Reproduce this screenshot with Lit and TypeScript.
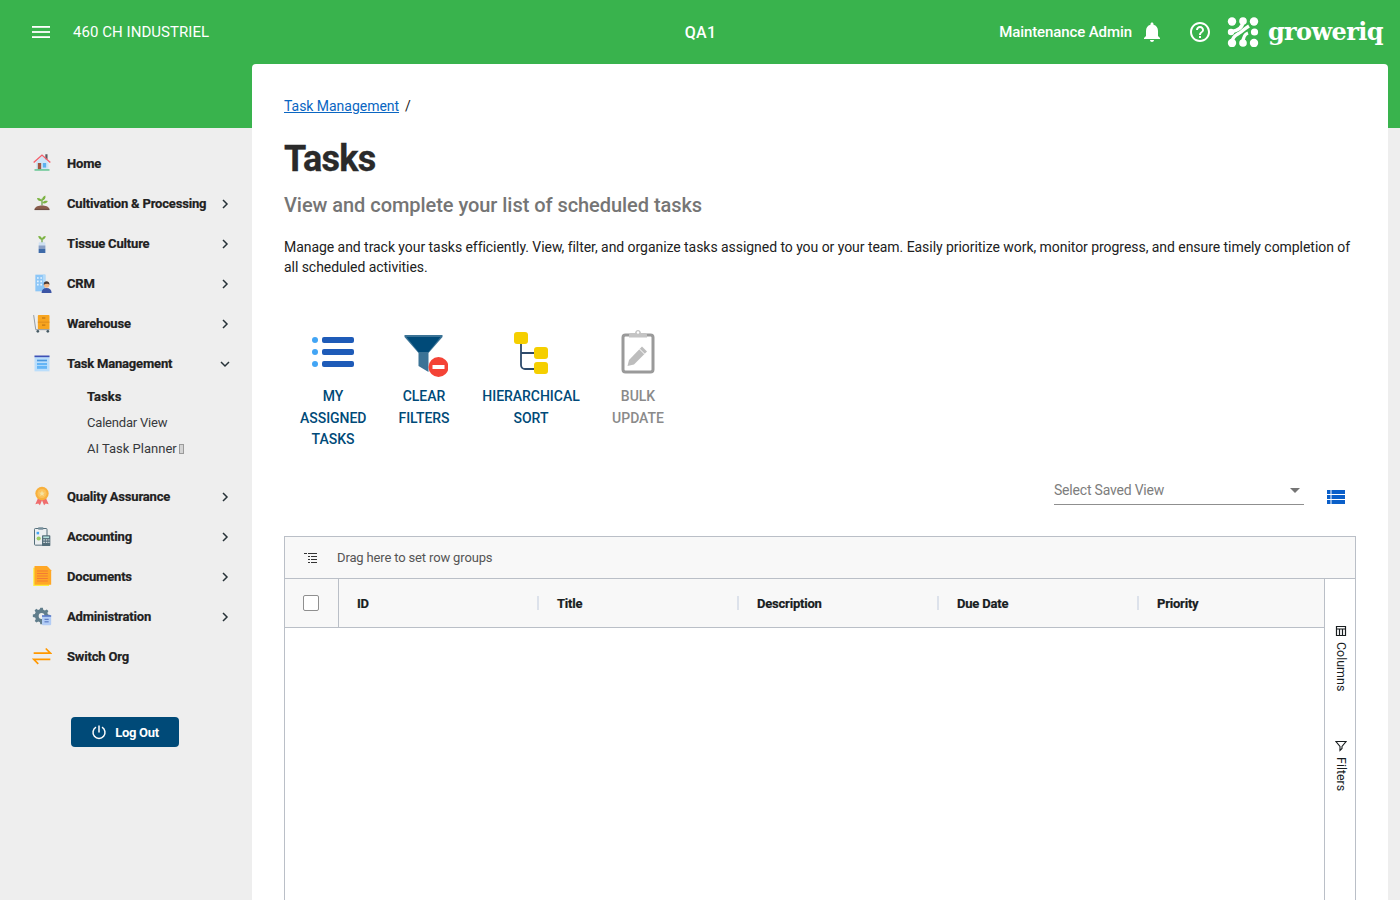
import { LitElement, css, html, svg } from "lit";
import { customElement } from "lit/decorators.js";

const menuIcons: Record<string, unknown> = {
  home: svg`<path d="M5 10.500 12 4l4 3.600V3h2.400v6.800L19.800 11v9H5z" fill="#cfe6f7"/><rect x="16" y="1.500" width="2.600" height="6" fill="#5d5a5f"/><path d="M2 11.500 12 2.500l10 9" fill="none" stroke="#f4606c" stroke-width="1.700"/><rect x="7" y="12" width="4" height="7.500" fill="#a1563f"/><rect x="13" y="12" width="4" height="5.500" fill="#5cb1ee"/><rect x="3" y="19.500" width="18" height="1.700" fill="#59c28a"/>`,
  plant: svg`<path d="M12 15V7" stroke="#5f9e3a" stroke-width="1.400"/><path d="M12 10C8 10 6.500 8.500 6 6c3-.5 5.500 1 6 4ZM12 9c0-3 1.500-5 4-6 .8 3-.5 5.500-4 6ZM12 12c2-2.500 4-3 7-2.400-1 2.600-3.500 3.600-7 2.400Z" fill="#7cb342"/><path d="M3 19.500c1-3.500 5-4.500 9-4.500s8 1 9 4.500Z" fill="#8a5d4c"/><rect x="3" y="19" width="18" height="1.500" fill="#6d4c41"/>`,
  tissue: svg`<path d="M12 12V6" stroke="#5f9e3a" stroke-width="1.400"/><path d="M12 8C9.500 8 8 6.500 7.500 3.500c3-.2 4.500 1.500 4.500 4.500ZM12 8c0-3 1.500-4.500 4.500-4.500C16 6.500 14.500 8 12 8Z" fill="#7cb342"/><rect x="8" y="11" width="8" height="13" rx="1" fill="#cfe0f2"/><rect x="8" y="15" width="8" height="4" fill="#8a9fc4"/><rect x="8" y="19" width="8" height="5" fill="#3e6aa8"/>`,
  crm: svg`<rect x="4" y="2" width="12" height="20" fill="#8cc6f7"/><path d="M6 5h2v2H6zm4 0h2v2h-2zM6 9h2v2H6zm4 0h2v2h-2zm-4 4h2v2H6zm4 0h2v2h-2z" fill="#e5f3fe"/><rect x="13" y="2" width="3" height="9" fill="#b2daf9"/><path d="M11.500 24c0-4 2.500-6 6-6s6 2 6 6Z" fill="#3c55a5"/><circle cx="17.500" cy="14.500" r="3.300" fill="#f3b98a"/><path d="M14 14c0-3 1.800-4 3.500-4s3.500 1 3.500 4c-1.500-1.500-4-1.500-7 0Z" fill="#4a3a35"/>`,
  warehouse: svg`<rect x="7" y="2.500" width="14" height="17" rx="1" fill="#f8a51f"/><path d="M7 11h14" stroke="#d9861a" stroke-width="1"/><path d="M12 6h4M12 14.500h4" stroke="#b46c12" stroke-width="1.200"/><path d="M2 2.500 4.500 20H21" fill="none" stroke="#8b949b" stroke-width="1.100"/><circle cx="7" cy="22" r="1.600" fill="#455a64"/><circle cx="19" cy="22" r="1.600" fill="#455a64"/>`,
  task: svg`<rect x="3" y="4" width="18" height="18" fill="#bbdefb"/><rect x="3" y="3" width="18" height="2" fill="#3f51b5"/><rect x="6" y="8" width="12" height="2" fill="#4a98e0"/><rect x="6" y="12" width="12" height="7" fill="#64b5f6"/><path d="M6 15h12" stroke="#bbdefb"/>`,
  quality: svg`<path d="m8 13-4 9 3.500-1 2 2L13 15Zm8 0 4 9-3.500-1-2 2L11 15Z" fill="#ef6d6d"/><circle cx="12" cy="9" r="8" fill="#f8b03c"/><circle cx="12" cy="9" r="5.500" fill="#fbc35c"/><path d="m12 5.500 1 2.300 2.500.2-1.900 1.600.6 2.400-2.200-1.300-2.200 1.300.6-2.400L8.500 8l2.500-.2Z" fill="#f5e3a2"/>`,
  accounting: svg`<rect x="3" y="3" width="15" height="20" rx="1" fill="#eceff1" stroke="#546e7a" stroke-width="1.200"/><rect x="7.500" y="1.500" width="6" height="3" fill="#78909c"/><rect x="5.500" y="7" width="3" height="3" fill="#42a5f5"/><circle cx="8" cy="15" r="2.500" fill="#9ccc65"/><rect x="12" y="11" width="10" height="13" rx="1" fill="#546e7a"/><path d="M13.500 16h2v1.500h-2zm3 0h2v1.500h-2zm-3 3h2v1.500h-2zm3 0h2v1.500h-2zm3-3h1.500v1.500H19.500zm0 3h1.500v1.500H19.500z" fill="#cfd8dc"/><rect x="13.500" y="12.500" width="7" height="2" fill="#b2dfdb"/>`,
  documents: svg`<rect x="1.500" y="2" width="19" height="22" fill="#ffeb3b"/><path d="M3 0h15l5 5v17.500H3Z" fill="#ffa726"/><path d="M6 6h13M6 9h13M6 12h13M6 15h13M6 18h13" stroke="#ef6c3a" stroke-width=".9"/>`,
  admin: svg`<path d="M10 2h3l.5 2.500 2 .9 2.200-1.300 2 2-1.300 2.200.8 2 2.500.6v3l-2.500.5-.8 2 1.300 2.200-2 2-2.200-1.300-2 .9L13 22h-3l-.5-2.500-2-.9-2.200 1.300-2-2 1.300-2.200-.9-2L1 13.200v-3l2.500-.6.900-2L3.100 5.400l2-2 2.200 1.300 2-.9Z" fill="#607d8b"/><circle cx="11.500" cy="12" r="3.500" fill="#eeeeee"/><rect x="12" y="12" width="11" height="11" rx="1" fill="#b3cdf5"/><rect x="12" y="11" width="11" height="2" fill="#5c7cc9"/><path d="M15 16h5M15 19h5" stroke="#4466b8" stroke-width="1.100"/>`,
  swap: svg`<path d="M2 8.500h20l-5.500-5.500M22 16H2l5.500 5.500" fill="none" stroke="#ff9800" stroke-width="2"/>`,
};

type MenuItem = { icon: string; label: string; chevron?: string };

const topMenu: MenuItem[] = [
  { icon: "home", label: "Home" },
  { icon: "plant", label: "Cultivation & Processing", chevron: "right" },
  { icon: "tissue", label: "Tissue Culture", chevron: "right" },
  { icon: "crm", label: "CRM", chevron: "right" },
  { icon: "warehouse", label: "Warehouse", chevron: "right" },
  { icon: "task", label: "Task Management", chevron: "down" },
];

const bottomMenu: MenuItem[] = [
  { icon: "quality", label: "Quality Assurance", chevron: "right" },
  { icon: "accounting", label: "Accounting", chevron: "right" },
  { icon: "documents", label: "Documents", chevron: "right" },
  { icon: "admin", label: "Administration", chevron: "right" },
  { icon: "swap", label: "Switch Org" },
];

const columns = ["ID", "Title", "Description", "Due Date", "Priority"];

@customElement("app-root")
export class AppRoot extends LitElement {
  static styles = css`
    :host {
      display: block;
      height: 900px;
      overflow: hidden;
      background: #eeeeee;
      font-family: Roboto, "Liberation Sans", sans-serif;
      color: #212121;
    }

    .band {
      height: 128px;
      background: #39b34d;
      color: #fff;
    }

    .toolbar {
      height: 64px;
      display: grid;
      grid-template-columns: 1fr auto 1fr;
      align-items: center;
      padding: 0 17px 0 16px;
      font-size: 15px;
    }

    .toolbar-left,
    .toolbar-right {
      display: flex;
      align-items: center;
    }

    .toolbar-left {
      margin-left: 16px;
    }

    .toolbar-right {
      justify-content: flex-end;
    }

    .org {
      margin-left: 23px;
      letter-spacing: 0.05px;
    }

    .env {
      font-size: 16px;
      font-weight: 500;
      letter-spacing: 0.3px;
      margin-left: 2px;
    }

    .user {
      font-weight: 500;
      letter-spacing: -0.1px;
      margin-right: 8px;
    }

    .help {
      margin-left: 24px;
      margin-right: 15px;
    }

    .logo-text {
      margin-left: 9px;
      font-family: "DejaVu Serif", serif;
      font-weight: 700;
      font-size: 24px;
      letter-spacing: -0.6px;
      line-height: 30px;
    }

    .body {
      display: flex;
      margin-top: -64px;
    }

    .side {
      width: 252px;
      flex: none;
      padding-top: 79px;
    }

    .item {
      height: 40px;
      display: flex;
      align-items: center;
      padding-left: 32px;
      font-size: 13px;
      font-weight: 700;
      letter-spacing: -0.18px;
      -webkit-text-stroke: 0.2px #212121;
      color: #212121;
    }

    .item svg.icon {
      width: 20px;
      height: 20px;
      flex: none;
    }

    .item .label {
      margin-left: 15px;
      flex: 1;
    }

    .item .chev {
      margin: 2px 22px 0 0;
    }

    .sub {
      padding: 0 0 14px 87px;
      font-size: 13px;
      color: #37393c;
      margin-top: 1px;
    }

    .sub div {
      height: 26px;
      line-height: 26px;
    }

    .sub .active {
      font-weight: 700;
      -webkit-text-stroke: 0.2px #212121;
      color: #212121;
    }

    .sub .cal {
      letter-spacing: -0.2px;
    }

    .tofu {
      display: inline-block;
      width: 5px;
      height: 10px;
      margin-left: 2px;
      vertical-align: -1px;
      background: #d4d4d4;
      border: 1px solid #9a9a9a;
      box-sizing: border-box;
    }

    .logout {
      width: 108px;
      height: 30px;
      margin: 41px 0 0 71px;
      display: flex;
      align-items: center;
      justify-content: center;
      gap: 8px;
      border: none;
      border-radius: 4px;
      background: #004a78;
      color: #fff;
      font-family: inherit;
      font-size: 13px;
      font-weight: 700;
      letter-spacing: -0.3px;
    }

    .main {
      flex: none;
      width: 1136px;
      box-sizing: border-box;
      height: 900px;
      background: #fff;
      border-radius: 4px 4px 0 0;
      padding: 32px;
      letter-spacing: -0.03px;
    }

    .crumbs {
      font-size: 14px;
      line-height: 20px;
      color: #212121;
    }

    .crumbs a {
      color: #0a66c2;
      text-decoration: underline;
    }

    .crumbs span {
      margin-left: 6px;
    }

    h1 {
      margin: 21px 0 0;
      font-size: 36px;
      font-weight: 700;
      line-height: 44px;
      letter-spacing: -0.7px;
      -webkit-text-stroke: 0.3px #2a2a2a;
      color: #2a2a2a;
    }

    h2 {
      margin: 10px 0 0;
      font-size: 20px;
      font-weight: 500;
      line-height: 28px;
      letter-spacing: -0.05px;
      color: #757575;
    }

    .desc {
      margin: 18px 0 0;
      font-size: 14px;
      line-height: 20px;
      letter-spacing: -0.05px;
      color: #212121;
    }

    .actions {
      display: flex;
      margin-top: 44px;
      height: 131px;
    }

    .action {
      padding: 8px 16px 0;
      text-align: center;
      font-size: 14px;
      font-weight: 500;
      line-height: 21.500px;
      color: #004a78;
      box-sizing: content-box;
    }

    .action.off {
      color: #8a8a8a;
    }

    .action svg {
      display: block;
      margin: 0 auto 9px;
      width: 48px;
      height: 48px;
    }

    .views {
      display: flex;
      justify-content: flex-end;
      align-items: center;
      height: 38px;
      padding-right: 11px;
      gap: 23px;
      margin-top: 18px;
    }

    .select {
      width: 250px;
      height: 32px;
      box-sizing: border-box;
      display: flex;
      align-items: center;
      justify-content: space-between;
      border-bottom: 1px solid #8f8f8f;
      color: #7d7d7d;
      font-size: 14px;
      letter-spacing: -0.2px;
      padding-top: 3px;
    }

    .select i {
      width: 0;
      height: 0;
      margin-right: 4px;
      border-left: 5px solid transparent;
      border-right: 5px solid transparent;
      border-top: 5px solid #757575;
    }

    .view-icon {
      margin-top: 16px;
    }

    .grid {
      margin-top: 29px;
      height: 500px;
      border: 1px solid #babfc7;
      display: flex;
      flex-direction: column;
    }

    .groups {
      height: 41px;
      flex: none;
      display: flex;
      align-items: center;
      background: #f8f8f8;
      border-bottom: 1px solid #babfc7;
      padding-left: 18px;
      gap: 18px;
      font-size: 13px;
      letter-spacing: -0.15px;
      color: #555;
    }

    .grid-body {
      flex: 1;
      display: flex;
    }

    .table {
      flex: 1;
      min-width: 0;
      overflow: hidden;
    }

    .head {
      height: 48px;
      display: flex;
      background: #f8f8f8;
      border-bottom: 1px solid #babfc7;
    }

    .check-col {
      width: 54px;
      flex: none;
      box-sizing: border-box;
      display: flex;
      align-items: center;
      padding-left: 18px;
      border-right: 1px solid #babfc7;
    }

    .check {
      width: 16px;
      height: 16px;
      background: #fff;
      border: 1.500px solid #8f8f8f;
      border-radius: 2px;
      box-sizing: border-box;
    }

    .col {
      width: 200px;
      flex: none;
      box-sizing: border-box;
      display: flex;
      align-items: center;
      justify-content: space-between;
      padding-left: 18px;
      font-size: 13px;
      font-weight: 700;
      letter-spacing: -0.2px;
      -webkit-text-stroke: 0.2px #181d1f;
      color: #181d1f;
    }

    .col i {
      width: 2px;
      height: 14px;
      background: #dde2eb;
    }

    .tools {
      width: 31px;
      flex: none;
      border-left: 1px solid #babfc7;
      box-sizing: border-box;
      display: flex;
      flex-direction: column;
      align-items: center;
      padding: 46px 0 0 2px;
      gap: 49px;
    }

    .tool {
      writing-mode: vertical-lr;
      display: flex;
      align-items: center;
      gap: 5px;
      font-size: 12.500px;
      color: #181d1f;
    }

    .tool svg {
      width: 12px;
      height: 12px;
    }
  `;

  chevron(dir?: string) {
    if (!dir) return null;
    return html`<svg class="chev" width="10" height="10" viewBox="0 0 10 10" fill="none" stroke="#263238" stroke-width="1.500">
      <path d=${dir === "down" ? "M1 3l4 4 4-4" : "M3 1l4 4-4 4"} />
    </svg>`;
  }

  menuItem(m: MenuItem) {
    return html`<div class="item">
      <svg class="icon" viewBox="0 0 24 24">${menuIcons[m.icon]}</svg>
      <span class="label">${m.label}</span>
      ${this.chevron(m.chevron)}
    </div>`;
  }

  logo() {
    return html`<svg width="32" height="30" viewBox="0 0 32 30" fill="#fff">
      <circle cx="5" cy="4.500" r="4.200" /><circle cx="16" cy="4" r="3.800" /><circle cx="27" cy="4.500" r="4.200" />
      <circle cx="4" cy="15" r="3.200" /><circle cx="27.500" cy="15" r="3.600" />
      <circle cx="5" cy="26" r="4.200" /><circle cx="16" cy="26" r="3.800" /><circle cx="27" cy="26" r="4.200" />
      <path d="M16 4c0 7-5 9-12 11M5 26c0-7 5-8 9-11s3-3 8-6M16 26c0-6 2-9 5-10" fill="none" stroke="#fff" stroke-width="3.400" />
    </svg>`;
  }

  render() {
    return html`
      <div class="band">
        <div class="toolbar">
          <div class="toolbar-left">
            <svg width="18" height="12" viewBox="0 0 18 12" fill="#fff">
              <rect width="18" height="1.800" y="0" /><rect width="18" height="1.800" y="5.100" /><rect width="18" height="1.800" y="10.200" />
            </svg>
            <span class="org">460 CH INDUSTRIEL</span>
          </div>
          <div class="env">QA1</div>
          <div class="toolbar-right">
            <span class="user">Maintenance Admin</span>
            <svg width="24" height="24" viewBox="0 0 24 24" fill="#fff">
              <path d="M12 22c1.100 0 2-.9 2-2h-4c0 1.100.9 2 2 2zm6-6v-5c0-3.100-1.600-5.600-4.500-6.300V4c0-.8-.7-1.500-1.500-1.500s-1.500.7-1.500 1.500v.7C7.600 5.400 6 7.900 6 11v5l-2 2v1h16v-1l-2-2z" />
            </svg>
            <svg class="help" width="24" height="24" viewBox="0 0 24 24" fill="#fff">
              <path d="M11 18h2v-2h-2v2zm1-16C6.500 2 2 6.500 2 12s4.500 10 10 10 10-4.500 10-10S17.500 2 12 2zm0 18c-4.400 0-8-3.600-8-8s3.600-8 8-8 8 3.600 8 8-3.600 8-8 8zm0-14c-2.200 0-4 1.800-4 4h2c0-1.100.9-2 2-2s2 .9 2 2c0 2-3 1.800-3 5h2c0-2.300 3-2.500 3-5 0-2.200-1.800-4-4-4z" />
            </svg>
            ${this.logo()}
            <span class="logo-text">groweriq</span>
          </div>
        </div>
      </div>
      <div class="body">
        <nav class="side">
          ${topMenu.map((m) => this.menuItem(m))}
          <div class="sub">
            <div class="active">Tasks</div>
            <div class="cal">Calendar View</div>
            <div>AI Task Planner<span class="tofu"></span></div>
          </div>
          ${bottomMenu.map((m) => this.menuItem(m))}
          <button class="logout">
            <svg width="16" height="16" viewBox="0 0 16 16" fill="none" stroke="#fff" stroke-width="1.500">
              <path d="M8 1.500v7M5 3.200a6 6 0 1 0 6 0" />
            </svg>
            Log Out
          </button>
        </nav>
        <main class="main">
          <div class="crumbs"><a>Task Management</a><span>/</span></div>
          <h1>Tasks</h1>
          <h2>View and complete your list of scheduled tasks</h2>
          <p class="desc">
            Manage and track your tasks efficiently. View, filter, and organize tasks assigned to you or your team. Easily prioritize work, monitor progress, and ensure timely completion of all scheduled activities.
          </p>
          <div class="actions">
            <div class="action" style="width:66px">
              <svg viewBox="-1 0 48 48">
                <circle cx="5" cy="11" r="3" fill="#42a5f5" /><circle cx="5" cy="23" r="3" fill="#42a5f5" /><circle cx="5" cy="35" r="3" fill="#42a5f5" />
                <rect x="12" y="8" width="32" height="6" rx="2" fill="#1e5bb8" /><rect x="12" y="20" width="32" height="6" rx="2" fill="#1e5bb8" /><rect x="12" y="32" width="32" height="6" rx="2" fill="#1e5bb8" />
              </svg>
              MY ASSIGNED TASKS
            </div>
            <div class="action" style="width:52px">
              <svg viewBox="-1.500 0 48 48">
                <path d="M3 6h38v2L27 24v19l-10-6V24L3 8Z" fill="#3b7396" />
                <path d="M5 8h34L27 23H17Z" fill="#004a78" />
                <circle cx="37" cy="38" r="10" fill="#f44336" /><rect x="31" y="36" width="12" height="4" fill="#fff" />
              </svg>
              CLEAR FILTERS
            </div>
            <div class="action" style="width:98px">
              <svg viewBox="-3 0 48 48">
                <path d="M11 14v22a4 4 0 0 0 4 4h14M11 24h18" fill="none" stroke="#2d4a6b" stroke-width="1.800" />
                <rect x="4" y="3" width="14" height="12" rx="3" fill="#f5cf00" /><rect x="24" y="18" width="14" height="12" rx="3" fill="#f5cf00" /><rect x="24" y="33" width="14" height="12" rx="3" fill="#f5cf00" />
              </svg>
              HIERARCHICAL SORT
            </div>
            <div class="action off" style="width:52px">
              <svg viewBox="0 0 48 48">
                <rect x="9" y="6" width="30" height="37" rx="2.500" fill="none" stroke="#9a9a9a" stroke-width="3" />
                <path d="M15 6c0-1.500 1.500-2 3-2h3c.5-4 5.500-4 6 0h3c1.500 0 3 .5 3 2v2.500H15Z" fill="#c4c4c4" />
                <circle cx="24" cy="3.500" r="1.200" fill="#fff" />
                <path d="M13.500 37 15 31l13-13.500 5 5L20 35.500Z" fill="#bdbdbd" />
                <path d="M25.500 20l5 5" stroke="#fff" stroke-width="1" />
              </svg>
              BULK UPDATE
            </div>
          </div>
          <div class="views">
            <div class="select">Select Saved View<i></i></div>
            <svg class="view-icon" width="18" height="14" viewBox="0 0 18 14" fill="#0a5fc9">
              <rect width="3.500" height="4" /><rect x="4.500" width="13.500" height="4" />
              <rect y="5" width="3.500" height="4" /><rect x="4.500" y="5" width="13.500" height="4" />
              <rect y="10" width="3.500" height="4" /><rect x="4.500" y="10" width="13.500" height="4" />
            </svg>
          </div>
          <div class="grid" style="margin-top:28px">
            <div class="groups">
              <svg width="16" height="12" viewBox="0 0 16 12" stroke="#333" stroke-width="1">
                <path d="M1 1.500h3M5 1.500h9M5 4.500h2M8 4.500h6M5 7.500h2M8 7.500h6M5 10.500h2M8 10.500h6" />
              </svg>
              Drag here to set row groups
            </div>
            <div class="grid-body">
              <div class="table">
                <div class="head">
                  <div class="check-col"><div class="check"></div></div>
                  ${columns.map((c, i) => html`<div class="col">${c}${i < 4 ? html`<i></i>` : null}</div>`)}
                </div>
              </div>
              <div class="tools">
                <div class="tool">
                  <svg viewBox="0 0 12 12" fill="none" stroke="#181d1f" stroke-width="1.200">
                    <path d="M1.500 1.500h9v9h-9zM1.500 4h9M4.500 4v6.500M7.500 4v6.500" />
                  </svg>
                  Columns
                </div>
                <div class="tool">
                  <svg viewBox="0 0 12 12" fill="none" stroke="#181d1f" stroke-width="1.100">
                    <path d="M1 1.500h10L7 6.500v2L5 10.500v-4Z" />
                  </svg>
                  Filters
                </div>
              </div>
            </div>
          </div>
        </main>
      </div>
    `;
  }
}
